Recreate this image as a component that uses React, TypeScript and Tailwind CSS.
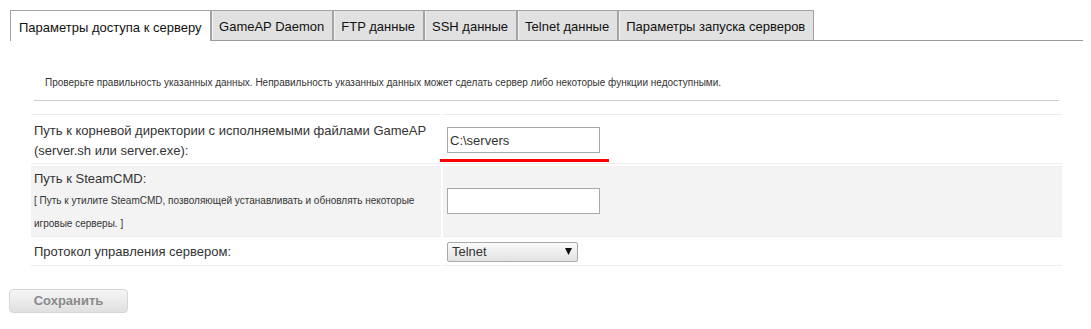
import React from "react";

const tabs = [
  "Параметры доступа к серверу",
  "GameAP Daemon",
  "FTP данные",
  "SSH данные",
  "Telnet данные",
  "Параметры запуска серверов",
];

export default function App() {
  return (
    <div
      className="min-h-[329px] bg-white pt-[10px] pl-[10px] pr-[8px] text-[#333]"
      style={{ fontFamily: '"Liberation Sans", Arial, sans-serif' }}
    >
      {/* Tabs */}
      <div className="flex h-[31px] border-b border-[#9a9a9a]">
        {tabs.map((t, i) =>
          i === 0 ? (
            <div
              key={t}
              className="relative z-10 -mb-px flex h-[31px] items-center border border-b-0 border-[#a3a3a3] bg-white px-[8px] pt-[3px] text-[13px] text-[#111]"
            >
              {t}
            </div>
          ) : (
            <div
              key={t}
              className="flex h-[30px] items-center border border-b-0 border-[#a3a3a3] bg-[#e1e1e1] px-[7.5px] pt-[3px] text-[13px] text-[#111] shadow-[inset_1px_0_0_#f4f4f4]"
            >
              {t}
            </div>
          )
        )}
      </div>

      {/* Content */}
      <div className="pl-[21px] pr-[21px]">
        <div className="px-[3px]">
          <p className="mt-[35px] pl-[11px] text-[10px] leading-[14px] text-[#333]">
            Проверьте правильность указанных данных. Неправильность указанных
            данных может сделать сервер либо некоторые функции недоступными.
          </p>
          <div className="mt-[10px] h-px bg-[#cccccc]" />
        </div>

        <div className="mt-[13px] flex flex-col gap-[2px] text-[13px]">
          {/* Row 1 */}
          <div className="flex gap-[2px]">
            <div className="w-[410px] shrink-0 border-y border-[#ececec] pl-[3px] pt-[6px] pb-[2px] leading-[20px]">
              Путь к корневой директории с исполняемыми файлами GameAP
              <br />
              (server.sh или server.exe):
            </div>
            <div className="relative flex-1 border-y border-[#ececec] pl-[4px] pt-[12px]">
              <input
                type="text"
                defaultValue="C:\servers"
                className="h-[26px] w-[153px] border border-[#a9a9a9] bg-white px-[2px] text-[13px] text-[#333] outline-none"
                style={{ fontFamily: '"Liberation Sans", Arial, sans-serif' }}
              />
              <div className="absolute left-[-3px] top-[44px] h-[3px] w-[169px] bg-[#ff0000]" />
            </div>
          </div>

          {/* Row 2 */}
          <div className="flex gap-[2px]">
            <div className="w-[410px] shrink-0 border-b border-[#ececec] bg-[#f3f3f3] pl-[3px] pt-[3px] pb-[1px]">
              <div className="leading-[20px]">Путь к SteamCMD:</div>
              <div className="text-[10px] leading-[23px]">
                [ Путь к утилите SteamCMD, позволяющей устанавливать и обновлять
                некоторые
                <br />
                игровые серверы. ]
              </div>
            </div>
            <div className="flex flex-1 items-center border-b border-[#ececec] bg-[#f3f3f3] pl-[4px]">
              <input
                type="text"
                className="h-[26px] w-[153px] border border-[#a9a9a9] bg-white px-[2px] text-[13px] text-[#333] outline-none"
              />
            </div>
          </div>

          {/* Row 3 */}
          <div className="flex gap-[2px]">
            <div className="w-[410px] shrink-0 border-b border-[#ececec] pl-[3px] pt-[3px] pb-[3px] leading-[20px]">
              Протокол управления сервером:
            </div>
            <div className="flex-1 border-b border-[#ececec] pl-[4px] pt-[3px]">
              <div className="relative h-[20px] w-[131px]">
                <select
                  defaultValue="telnet"
                  className="h-[20px] w-[131px] appearance-none rounded-[2px] border border-[#a9a9a9] bg-gradient-to-b from-[#fafafa] to-[#e3e3e3] pl-[4px] text-[13px] leading-[18px] text-[#333] outline-none"
                  style={{ fontFamily: '"Liberation Sans", Arial, sans-serif' }}
                >
                  <option value="telnet">Telnet</option>
                  <option value="ssh">SSH</option>
                  <option value="gdaemon">GameAP Daemon</option>
                </select>
                <svg
                  className="pointer-events-none absolute right-[6px] top-[6px]"
                  width="7"
                  height="8"
                  viewBox="0 0 7 8"
                >
                  <polygon points="0,0 7,0 3.5,7" fill="#111" />
                </svg>
              </div>
            </div>
          </div>
        </div>
      </div>

      {/* Button */}
      <div className="mt-[22px] -ml-px pb-[17px]">
        <button
          type="button"
          className="h-[24px] w-[119px] rounded-[4px] border border-[#d6d6d6] bg-gradient-to-b from-[#f6f6f6] to-[#e0e0e0] text-[13px] font-bold text-[#8a8a8a]"
          style={{ fontFamily: '"Liberation Sans", Arial, sans-serif' }}
        >
          Сохранить
        </button>
      </div>
    </div>
  );
}
